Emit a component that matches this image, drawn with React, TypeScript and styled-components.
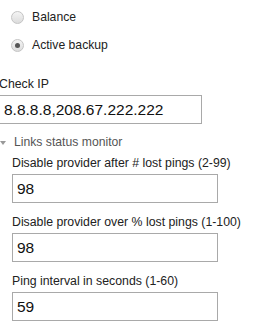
import React, { useState } from 'react';
import styled, { createGlobalStyle } from 'styled-components';

const Global = createGlobalStyle`
    body {
        margin: 0;
        background: #fff;
        font-family: "Liberation Sans", Arial, sans-serif;
        color: #222;
    }
`;

const Page = styled.div`
    margin-left: -1px;
    padding-top: 3px;
    width: 280px;
`;

const RadioRow = styled.label`
    display: flex;
    align-items: center;
    height: 28px;
    padding-left: 12px;
    gap: 8px;
    font-size: 12.2px;
    color: #222;
    cursor: pointer;
`;

const RadioDot = styled.span<{ $on: boolean }>`
    width: 11px;
    height: 11px;
    border-radius: 50%;
    border: 1px solid #c4c4c4;
    background: linear-gradient(#f4f4f4, #dcdcdc);
    display: flex;
    align-items: center;
    justify-content: center;
    &::after {
        content: '';
        display: ${p => (p.$on ? 'block' : 'none')};
        width: 5px;
        height: 5px;
        border-radius: 50%;
        background: #555;
    }
`;

const Field = styled.div<{ $indent?: number; $top?: number }>`
    display: flex;
    flex-direction: column;
    padding-left: ${p => p.$indent || 0}px;
    margin-top: ${p => (p.$top === undefined ? 11 : p.$top)}px;
`;

const Label = styled.div`
    font-size: 12.3px;
    line-height: 16px;
    color: #222;
    margin-bottom: 3px;
`;

const TextBox = styled.input<{ $wide?: boolean }>`
    box-sizing: border-box;
    width: ${p => (p.$wide ? 203 : 206)}px;
    height: 29px;
    border: 1px solid #a9a9a9;
    padding: 0 4px;
    font-family: "Liberation Sans", Arial, sans-serif;
    font-size: 15.5px;
    color: #111;
    outline: none;
`;

const Section = styled.div`
    margin-top: 10px;
    display: flex;
    align-items: center;
    gap: 8px;
    padding-left: 1px;
    font-size: 12.2px;
    line-height: 16px;
    color: #555;
`;

const Caret = styled.span`
    width: 0;
    height: 0;
    border-left: 3.5px solid transparent;
    border-right: 3.5px solid transparent;
    border-top: 4px solid #999;
    margin-top: 2px;
`;

const App = () => {
    const [mode, setMode] = useState('active');
    const [ips, setIps] = useState('8.8.8.8,208.67.222.222');
    const [lost, setLost] = useState('98');
    const [pct, setPct] = useState('98');
    const [interval, setInterval] = useState('59');

    return (
        <Page>
            <Global />
            <RadioRow onClick={() => setMode('balance')}>
                <RadioDot $on={mode === 'balance'} />
                Balance
            </RadioRow>
            <RadioRow onClick={() => setMode('active')}>
                <RadioDot $on={mode === 'active'} />
                Active backup
            </RadioRow>
            <Field $top={17}>
                <Label>Check IP</Label>
                <TextBox $wide value={ips} onChange={e => setIps(e.target.value)} />
            </Field>
            <Section>
                <Caret />
                Links status monitor
            </Section>
            <Field $indent={13} $top={5}>
                <Label>Disable provider after # lost pings (2-99)</Label>
                <TextBox value={lost} onChange={e => setLost(e.target.value)} />
            </Field>
            <Field $indent={13}>
                <Label>Disable provider over % lost pings (1-100)</Label>
                <TextBox value={pct} onChange={e => setPct(e.target.value)} />
            </Field>
            <Field $indent={13}>
                <Label>Ping interval in seconds (1-60)</Label>
                <TextBox value={interval} onChange={e => setInterval(e.target.value)} />
            </Field>
        </Page>
    );
};

export default App;
